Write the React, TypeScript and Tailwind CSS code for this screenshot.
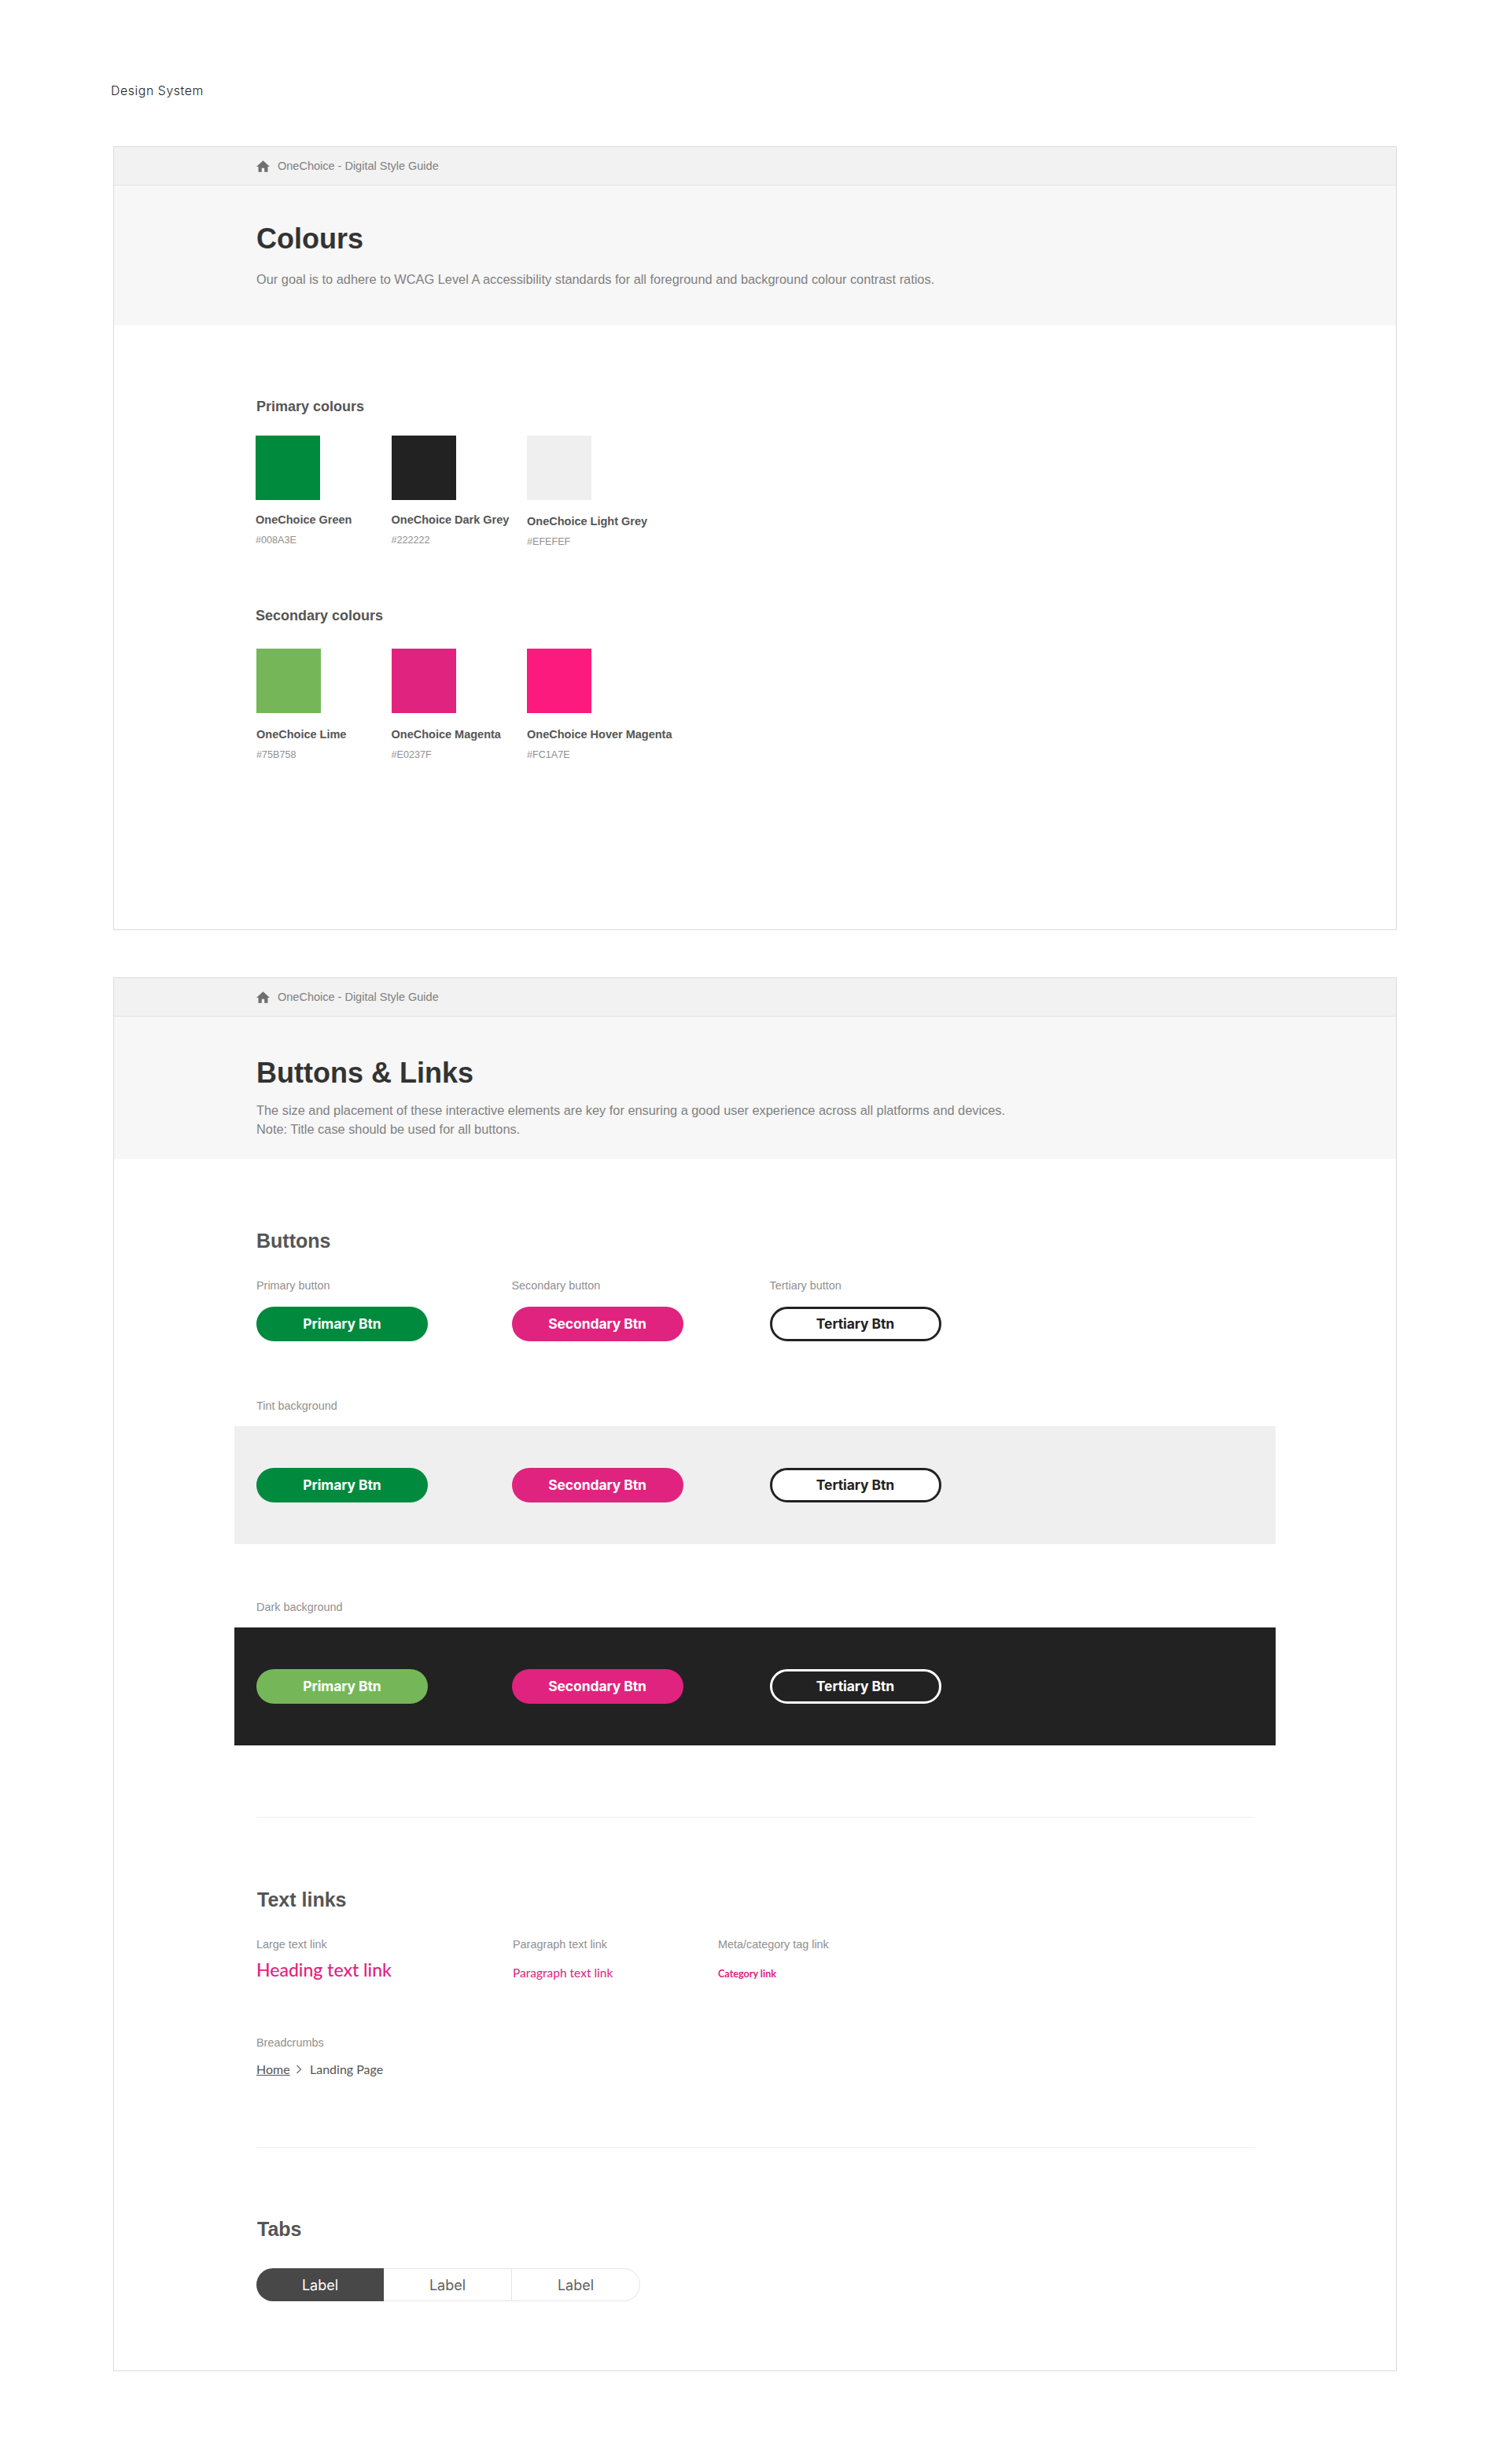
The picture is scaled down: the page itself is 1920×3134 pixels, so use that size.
import React from "react";

const sans = "font-['Liberation_Sans',Arial,sans-serif]";
const display = "font-['Lato',sans-serif]";
const ui = "font-['Inter',sans-serif]";

function HomeIcon() {
  return (
    <svg viewBox="2 3 20 17" className="w-[17px] h-[15px] fill-[#6f6f6f]">
      <path d="M10 20v-6h4v6h5v-8h3L12 3 2 12h3v8z" />
    </svg>
  );
}

function TopBar() {
  return (
    <div className="h-[49px] flex items-center gap-[10px] pl-[181px] bg-[#f2f2f2] border-b border-[#e3e3e3]">
      <HomeIcon />
      <span className="mt-px text-[14.5px] text-[#808080]">OneChoice - Digital Style Guide</span>
    </div>
  );
}

function Swatch({ color, name, hex, nudge }: { color: string; name: string; hex: string; nudge?: boolean }) {
  return (
    <div className="w-[172.5px]">
      <div className={`w-[82px] h-[82px] ${color}`} />
      <div className={`${nudge ? "mt-[17px]" : "mt-[15px]"} whitespace-nowrap text-[14.5px] leading-5 font-bold text-[#555555]`}>{name}</div>
      <div className="mt-[8px] text-[12.6px] leading-4 text-[#909090]">{hex}</div>
    </div>
  );
}

function PillBtn({ kind, label, dark }: { kind: "primary" | "secondary" | "tertiary"; label: string; dark?: boolean }) {
  let tone = "bg-[#E0237F] text-white";
  if (kind === "primary") tone = dark ? "bg-[#75B758] text-white" : "bg-[#008A3E] text-white";
  if (kind === "tertiary") tone = dark ? "bg-[#222222] border-[3px] border-white text-white" : "bg-white border-[3px] border-[#222222] text-[#222222]";
  return (
    <div className={`${ui} w-[218px] h-[44px] rounded-[22px] flex items-center justify-center text-[17.5px] tracking-[-0.1px] font-bold ${tone}`}>{label}</div>
  );
}

function BtnRow({ dark }: { dark?: boolean }) {
  return (
    <div className="flex">
      <div className="w-[324.5px]"><PillBtn kind="primary" label="Primary Btn" dark={dark} /></div>
      <div className="w-[328px]"><PillBtn kind="secondary" label="Secondary Btn" dark={dark} /></div>
      <PillBtn kind="tertiary" label="Tertiary Btn" dark={dark} />
    </div>
  );
}

function Label({ children }: { children: React.ReactNode }) {
  return <div className="text-[14.4px] leading-5 text-[#909090] whitespace-nowrap">{children}</div>;
}

function SectionTitle({ children }: { children: React.ReactNode }) {
  return <h3 className="text-[25px] leading-8 font-bold text-[#555555]">{children}</h3>;
}

export default function App() {
  return (
    <div className={`${sans} w-[1920px] h-[3134px] bg-white`}>
      <div className="px-[141px] pt-[105px]">
        <p className="font-['Inter',sans-serif] font-light text-[15.8px] leading-[22px] tracking-[0.6px] text-[#222222]">Design System</p>
      </div>

      {/* Colours */}
      <section className="mx-[144px] mt-[59px] h-[997px] border border-[#dcdcdc]">
        <TopBar />
        <div className="h-[178px] pl-[181px] pt-[46px] bg-[#f7f7f7]">
          <h1 className="text-[36px] leading-[44px] font-bold text-[#333333]">Colours</h1>
          <p className="mt-[17px] text-[16.35px] leading-6 text-[#808080]">
            Our goal is to adhere to WCAG Level A accessibility standards for all foreground and background colour contrast ratios.
          </p>
        </div>
        <div className="pl-[180px] pt-[91px]">
          <h2 className="ml-px text-[18px] leading-6 font-bold text-[#555555]">Primary colours</h2>
          <div className="mt-[25px] flex">
            <Swatch color="bg-[#008A3E]" name="OneChoice Green" hex="#008A3E" />
            <Swatch color="bg-[#222222]" name="OneChoice Dark Grey" hex="#222222" />
            <Swatch color="bg-[#EFEFEF]" name="OneChoice Light Grey" hex="#EFEFEF" nudge />
          </div>
          <h2 className="mt-[74px] text-[18px] leading-6 font-bold text-[#555555]">Secondary colours</h2>
          <div className="mt-[30px] flex">
            <div className="pl-px w-[172.5px]"><Swatch color="bg-[#75B758]" name="OneChoice Lime" hex="#75B758" nudge /></div>
            <Swatch color="bg-[#E0237F]" name="OneChoice Magenta" hex="#E0237F" nudge />
            <Swatch color="bg-[#FC1A7E]" name="OneChoice Hover Magenta" hex="#FC1A7E" nudge />
          </div>
        </div>
      </section>

      {/* Buttons & Links */}
      <section className="mx-[144px] mt-[60px] h-[1773px] border border-[#dcdcdc]">
        <TopBar />
        <div className="h-[181px] pl-[181px] pt-[50px] bg-[#f7f7f7]">
          <h1 className="text-[36px] leading-[44px] font-bold text-[#333333]">Buttons &amp; Links</h1>
          <p className="mt-[13px] text-[16.35px] leading-6 text-[#808080]">
            The size and placement of these interactive elements are key for ensuring a good user experience across all platforms and devices.
            <br />
            Note: Title case should be used for all buttons.
          </p>
        </div>

        <div className="pl-[181px] pt-[88px]">
          <SectionTitle>Buttons</SectionTitle>
          <div className="mt-[31px] flex">
            <div className="w-[324.5px]"><Label>Primary button</Label></div>
            <div className="w-[328px]"><Label>Secondary button</Label></div>
            <Label>Tertiary button</Label>
          </div>
          <div className="mt-[17px]"><BtnRow /></div>

          <div className="mt-[72px]"><Label>Tint background</Label></div>
          <div className="mt-[16px] -ml-[28px] w-[1324px] h-[150px] pl-[28px] flex items-center bg-[#EFEFEF]"><BtnRow /></div>

          <div className="mt-[70px]"><Label>Dark background</Label></div>
          <div className="mt-[16px] -ml-[28px] w-[1324px] h-[150px] pl-[28px] flex items-center bg-[#222222]"><BtnRow dark /></div>

          <hr className="mt-[91px] w-[1269px] border-[#eeeeee]" />

          <div className="mt-[88px] ml-px"><SectionTitle>Text links</SectionTitle></div>
          <div className="mt-[31px] flex">
            <div className="w-[326px]">
              <Label>Large text link</Label>
              <a className={`${display} block mt-[6px] text-[23px] leading-8 font-medium text-[#E0237F]`}>Heading text link</a>
            </div>
            <div className="w-[261px]">
              <Label>Paragraph text link</Label>
              <a className={`${display} block mt-[16px] text-[15.5px] leading-5 font-normal text-[#E0237F]`}>Paragraph text link</a>
            </div>
            <div>
              <Label>Meta/category tag link</Label>
              <a className={`${display} block mt-[20px] text-[12.6px] leading-4 font-bold text-[#E0237F]`}>Category link</a>
            </div>
          </div>
          <div className="mt-[67px]"><Label>Breadcrumbs</Label></div>
          <div className={`${display} mt-[14px] flex items-center text-[16px] leading-5 text-[#555555]`}>
            <a className="underline w-[50px]">Home</a>
            <svg viewBox="0 0 8 12" className="w-[8px] h-[12px] fill-none stroke-[#6f6f6f] stroke-[1.3]"><path d="M1.5 1l5 5-5 5" /></svg>
            <span className="ml-[10px]">Landing Page</span>
          </div>

          <hr className="mt-[89px] w-[1269px] border-[#eeeeee]" />

          <div className="mt-[87px] ml-px"><SectionTitle>Tabs</SectionTitle></div>
          <div className={`${ui} mt-[34px] flex w-[488px] h-[42px] text-[18px] font-normal`}>
            <div className="flex-1 flex items-center justify-center rounded-l-[21px] bg-[#484848] text-white">Label</div>
            <div className="flex-1 flex items-center justify-center border-y border-r border-[#e5e5e5] text-[#5f5f5f]">Label</div>
            <div className="flex-1 flex items-center justify-center rounded-r-[21px] border-y border-r border-[#e5e5e5] text-[#5f5f5f]">Label</div>
          </div>
        </div>
      </section>
    </div>
  );
}
